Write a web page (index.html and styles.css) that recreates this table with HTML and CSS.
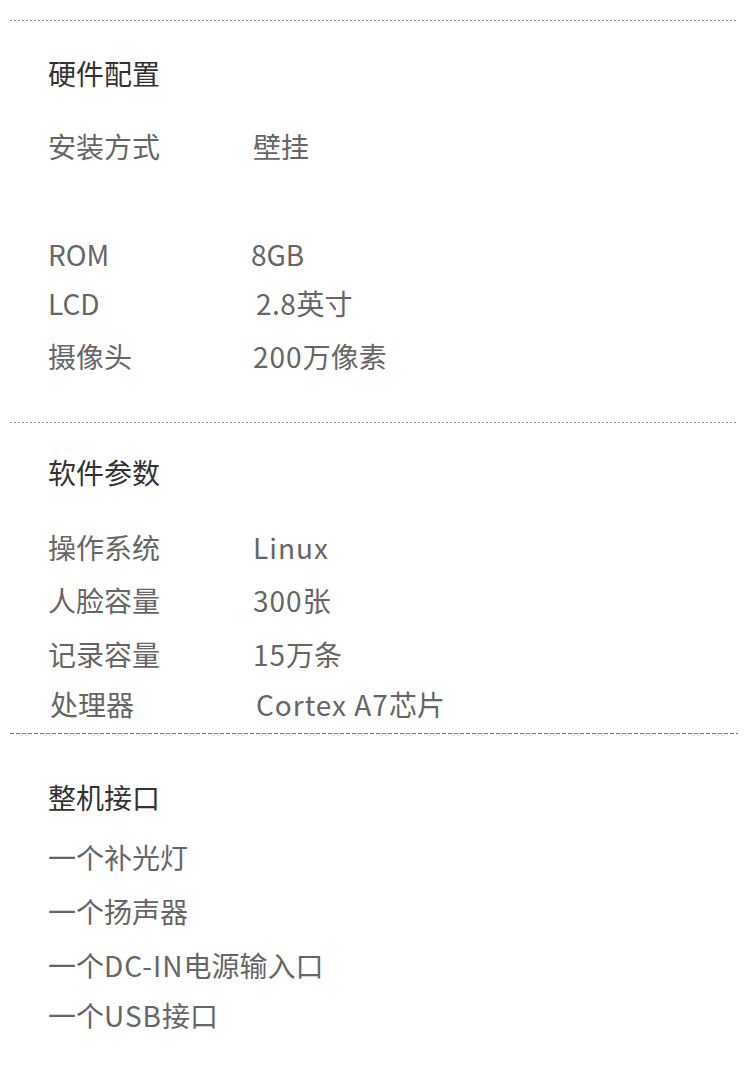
FILE: index.html
```html
<!DOCTYPE html>
<html lang="zh-CN">
<head>
<meta charset="utf-8">
<title>参数</title>
<link rel="stylesheet" href="styles.css">
</head>
<body>
<div class="page">
  <div class="rule rule-dot"></div>
  <section class="sec">
    <h2 class="title mt-28">硬件配置</h2>
    <div class="row mt-25"><span class="k">安装方式</span><span class="v">壁挂</span></div>
    <div class="row mt-60"><span class="k">ROM</span><span class="v v-l">8GB</span></div>
    <div class="row mt-1"><span class="k">LCD</span><span class="v v-r"><span class="lat-s">2.8</span>英寸</span></div>
    <div class="row mt-5"><span class="k">摄像头</span><span class="v"><span class="lat">200</span>万像素</span></div>
  </section>
  <div class="rule rule-dot mt-42"></div>
  <section class="sec">
    <h2 class="title mt-25">软件参数</h2>
    <div class="row mt-27"><span class="k">操作系统</span><span class="v lat">Linux</span></div>
    <div class="row mt-5"><span class="k">人脸容量</span><span class="v"><span class="lat">300</span>张</span></div>
    <div class="row mt-6"><span class="k">记录容量</span><span class="v"><span class="lat">15</span>万条</span></div>
    <div class="row mt-2"><span class="k k-r">处理器</span><span class="v v-r"><span class="lat">Cortex A7</span>芯片</span></div>
  </section>
  <div class="rule rule-dash mt-5"></div>
  <section class="sec">
    <h2 class="title mt-39">整机接口</h2>
    <div class="row mt-12"><span class="k">一个补光灯</span></div>
    <div class="row mt-6"><span class="k">一个扬声器</span></div>
    <div class="row mt-6"><span class="k">一个<span class="lat">DC-IN</span>电源输入口</span></div>
    <div class="row mt-2"><span class="k">一个<span class="lat">USB</span>接口</span></div>
  </section>
</div>
</body>
</html>
```

FILE: styles.css
```css
* { box-sizing: border-box; }
html, body { margin: 0; padding: 0; background: #fff; }
body {
  font-family: "Noto Sans CJK SC", "Noto Sans", sans-serif;
  color: #666;
}
.page {
  width: 750px;
  padding-top: 20px;
}
.rule {
  height: 1px;
  margin-left: 10px;
  margin-right: 12px;
}
.rule-dot {
  background: repeating-linear-gradient(90deg, #9a9a9a 0 2px, transparent 2px 4px);
}
.rule-dash {
  background: repeating-linear-gradient(90deg, #777 0 4px, transparent 4px 6px);
}
.sec { padding-left: 48px; }
.title {
  margin: 0;
  height: 48px;
  line-height: 48px;
  font-size: 28px;
  font-weight: 400;
  color: #333;
}
.row {
  display: flex;
  height: 48px;
  line-height: 48px;
  font-size: 28px;
  color: #666;
}
.k { width: 205px; flex: none; white-space: nowrap; }
.k-r { padding-left: 2px; }
.v { white-space: nowrap; }
.v-l { margin-left: -2px; }
.v-r { margin-left: 3px; }
.lat { letter-spacing: 1px; }
.lat-s { letter-spacing: 0.5px; }
.mt-1 { margin-top: 1px; }
.mt-2 { margin-top: 2px; }
.mt-5 { margin-top: 5px; }
.mt-6 { margin-top: 6px; }
.mt-12 { margin-top: 12px; }
.mt-25 { margin-top: 25px; }
.mt-27 { margin-top: 27px; }
.mt-28 { margin-top: 28px; }
.mt-39 { margin-top: 39px; }
.mt-42 { margin-top: 42px; }
.mt-60 { margin-top: 60px; }
```
